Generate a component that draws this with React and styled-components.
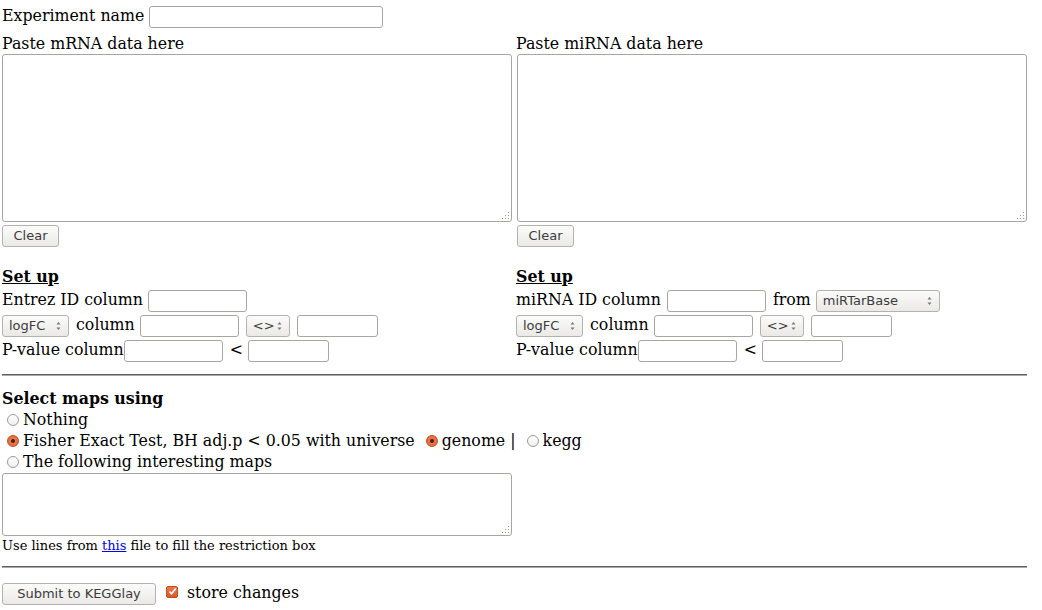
import React from "react";
import styled, { createGlobalStyle } from "styled-components";

const Global = createGlobalStyle`
  html, body { margin: 0; padding: 0; background: #fff; }
  body { font-family: "DejaVu Serif", serif; font-size: 15.8px; color: #000; }
`;

const Page = styled.div`
  width: 1025px;
  padding: 4px 0 0 2px;
`;

const Row = styled.div`
  height: ${(p) => p.h || 24}px;
  line-height: ${(p) => p.h || 24}px;
  white-space: pre;
`;

const Label = styled.div`
  height: 21px;
  line-height: 21px;
  margin-top: ${(p) => p.mt || 0}px;
`;

const Heading = styled.div`
  font-weight: bold;
  line-height: 20px;
  height: 20px;
  text-decoration: ${(p) => (p.u ? "underline" : "none")};
  margin-top: ${(p) => p.mt || 0}px;
`;

const TextInput = styled.input`
  box-sizing: border-box;
  width: ${(p) => p.w}px;
  height: 22px;
  border: 1px solid #a7a6a2;
  border-radius: 3px;
  background: #fff;
  padding: 0 4px;
  font-family: "DejaVu Sans", sans-serif;
  font-size: 13px;
  margin: 0 2px 0 ${(p) => p.ml || 0}px;
  outline: none;
  vertical-align: middle;
`;

const Columns = styled.div`
  display: grid;
  grid-template-columns: 514px 511px;
`;

const Col = styled.div`
  display: flex;
  flex-direction: column;
`;

const AreaWrap = styled.div`
  position: relative;
  width: ${(p) => p.w}px;
  height: ${(p) => p.h}px;
  margin-left: ${(p) => p.ml || 0}px;
  margin-top: ${(p) => p.mt || 0}px;
`;

const Area = styled.textarea`
  box-sizing: border-box;
  width: 100%;
  height: 100%;
  border: 1px solid #a7a6a2;
  border-radius: 3px;
  resize: none;
  margin: 0;
  padding: 2px;
  display: block;
  outline: none;
`;

const Grip = styled.svg`
  position: absolute;
  right: 2px;
  bottom: 2px;
  width: 9px;
  height: 9px;
`;

const Button = styled.button`
  box-sizing: border-box;
  height: 22px;
  width: ${(p) => p.w}px;
  border: 1px solid #b3b2ae;
  border-radius: 3px;
  background: linear-gradient(#fbfbfa, #eae9e6);
  font-family: "DejaVu Sans", sans-serif;
  font-size: 13px;
  color: #3c3c3c;
  padding: 0;
  margin: 0 0 0 ${(p) => p.ml || 0}px;
  vertical-align: middle;
`;

const SelWrap = styled.span`
  position: relative;
  width: ${(p) => p.w}px;
  height: 22px;
  box-sizing: border-box;
  border: 1px solid #b3b2ae;
  border-radius: 3px;
  background: linear-gradient(#fbfbfa, #eae9e6);
  font-family: "DejaVu Sans", sans-serif;
  font-size: 13px;
  color: #3c3c3c;
  display: inline-flex;
  align-items: center;
  padding-left: 6px;
  margin-right: 2px;
  vertical-align: middle;
  line-height: 20px;
`;

const Arrows = styled.svg`
  position: absolute;
  right: 6px;
  top: 4px;
  width: 7px;
  height: 12px;
`;

const Select = ({ w, children }) => (
  <SelWrap w={w}>
    {children}
    <Arrows viewBox="0 0 7 12">
      <path d="M1.5 4.5 L3.5 2 L5.5 4.5 Z" fill="#777" />
      <path d="M1.5 7.5 L3.5 10 L5.5 7.5 Z" fill="#777" />
    </Arrows>
  </SelWrap>
);

const Rule = styled.hr`
  margin: ${(p) => p.m || "0"};
  height: 0;
  border: none;
  border-top: 1px solid #5e5e5e;
  border-bottom: 1px solid #a9a9a9;
`;

const RadioDot = styled.span`
  box-sizing: border-box;
  display: inline-block;
  vertical-align: middle;
  width: 12px;
  height: 12px;
  border-radius: 50%;
  margin: 0 4px 2px ${(p) => p.ml ?? 5}px;
  border: 1px solid ${(p) => (p.on ? "#c5501f" : "#9c9b97")};
  background: ${(p) =>
    p.on
      ? "radial-gradient(circle, #5a2010 0 1.6px, #ea7a4f 2.4px, #dd5a2a 100%)"
      : "linear-gradient(#fff, #f0efed)"};
`;

const Check = styled.span`
  position: relative;
  box-sizing: border-box;
  display: inline-block;
  vertical-align: middle;
  width: 12px;
  height: 12px;
  border-radius: 2px;
  margin: 0 9px 3px 10px;
  background: linear-gradient(#ea7a4f, #d9592a);
  border: 1px solid #bf4e1e;
`;

const CheckMark = styled.svg`
  position: absolute;
  left: 1px;
  top: 0px;
  width: 9px;
  height: 9px;
`;

const Small = styled.div`
  font-size: 13px;
  height: 20px;
  line-height: 20px;
`;

const Link = styled.a`
  color: #0000ee;
  text-decoration: underline;
`;

const GripIcon = () => (
  <Grip viewBox="0 0 9 9">
    {[
      [7, 1],
      [7, 4],
      [4, 4],
      [7, 7],
      [4, 7],
      [1, 7],
    ].map(([x, y], i) => (
      <rect key={i} x={x} y={y} width="1" height="1" fill="#999" />
    ))}
  </Grip>
);

export default function App() {
  return (
    <Page>
      <Global />
      <Row>
        Experiment name <TextInput w={234} />
      </Row>
      <Columns>
        <Col>
          <Label mt={5}>Paste mRNA data here</Label>
          <AreaWrap w={510} h={168}>
            <Area />
            <GripIcon />
          </AreaWrap>
          <Row h={26}>
            <Button w={57}>Clear</Button>
          </Row>
          <Heading u mt={19}>Set up</Heading>
          <Row h={25}>
            Entrez ID column <TextInput w={99} />
          </Row>
          <Row h={25}>
            <Select w={67}>logFC</Select> column <TextInput w={99} /> <Select w={44}>{"<>"}</Select> <TextInput w={81} />
          </Row>
          <Row h={25}>
            P-value column<TextInput w={99} /> {"<"} <TextInput w={81} />
          </Row>
        </Col>
        <Col>
          <Label mt={5}>Paste miRNA data here</Label>
          <AreaWrap w={510} h={168} ml={1}>
            <Area />
            <GripIcon />
          </AreaWrap>
          <Row h={26}>
            <Button w={57} ml={1}>Clear</Button>
          </Row>
          <Heading u mt={19}>Set up</Heading>
          <Row h={25}>
            miRNA ID column <TextInput w={99} ml={1} /> from <Select w={124}>miRTarBase</Select>
          </Row>
          <Row h={25}>
            <Select w={67}>logFC</Select> column <TextInput w={99} /> <Select w={44}>{"<>"}</Select> <TextInput w={81} />
          </Row>
          <Row h={25}>
            P-value column<TextInput w={99} /> {"<"} <TextInput w={81} />
          </Row>
        </Col>
      </Columns>
      <Rule m="12px 0 13px 0" />
      <Heading>Select maps using</Heading>
      <Row h={21}>
        <RadioDot />Nothing
      </Row>
      <Row h={21}>
        <RadioDot on />Fisher Exact Test, BH adj.p {"<"} 0.05 with universe <RadioDot on ml={6} />genome | <RadioDot ml={6} />kegg
      </Row>
      <Row h={21}>
        <RadioDot />The following interesting maps
      </Row>
      <AreaWrap w={510} h={63} mt={1}>
        <Area />
        <GripIcon />
      </AreaWrap>
      <Small>
        Use lines from <Link href="#">this</Link> file to fill the restriction box
      </Small>
      <Rule m="10px 0 13px 0" />
      <Row h={24}>
        <Button w={154}>Submit to KEGGlay</Button>
        <Check>
          <CheckMark viewBox="0 0 9 9">
            <path d="M1.5 4.5 L3.5 6.8 L7.8 1.5" fill="none" stroke="#fff" strokeWidth="1.6" />
          </CheckMark>
        </Check>
        store changes
      </Row>
    </Page>
  );
}
